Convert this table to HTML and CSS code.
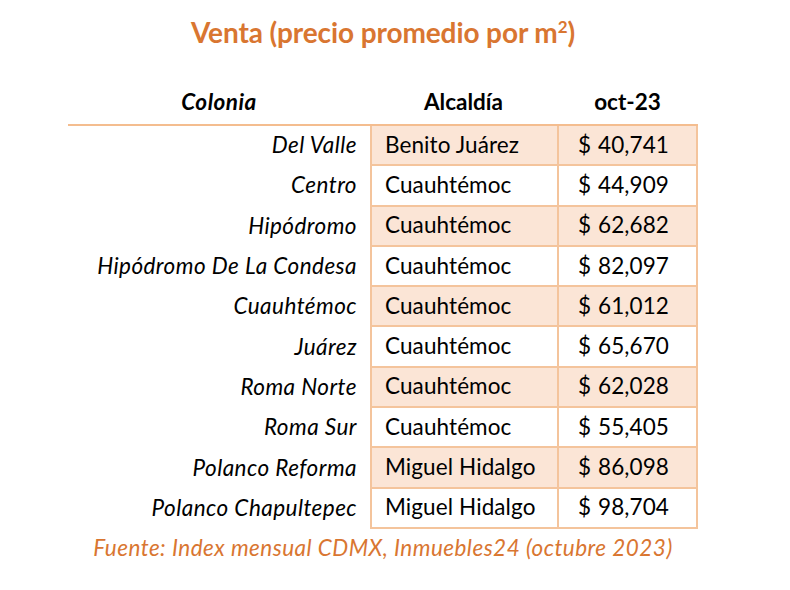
FILE: index.html
```html
<!DOCTYPE html>
<html lang="es">
<head>
<meta charset="utf-8">
<title>Venta (precio promedio por m²)</title>
<link rel="stylesheet" href="styles.css">
</head>
<body>
<div class="wrap">
  <h1 class="title">Venta (precio promedio por m<sup>2</sup>)</h1>
  <div class="table">
    <div class="hd hd-col">Colonia</div>
    <div class="hd">Alcaldía</div>
    <div class="hd">oct-23</div>

    <div class="col">Del Valle</div><div class="cell fill">Benito Juárez</div><div class="cell fill money"><span>$</span><span>40,741</span></div>
    <div class="col">Centro</div><div class="cell">Cuauhtémoc</div><div class="cell money"><span>$</span><span>44,909</span></div>
    <div class="col">Hipódromo</div><div class="cell fill">Cuauhtémoc</div><div class="cell fill money"><span>$</span><span>62,682</span></div>
    <div class="col">Hipódromo De La Condesa</div><div class="cell">Cuauhtémoc</div><div class="cell money"><span>$</span><span>82,097</span></div>
    <div class="col">Cuauhtémoc</div><div class="cell fill">Cuauhtémoc</div><div class="cell fill money"><span>$</span><span>61,012</span></div>
    <div class="col">Juárez</div><div class="cell">Cuauhtémoc</div><div class="cell money"><span>$</span><span>65,670</span></div>
    <div class="col">Roma Norte</div><div class="cell fill">Cuauhtémoc</div><div class="cell fill money"><span>$</span><span>62,028</span></div>
    <div class="col">Roma Sur</div><div class="cell">Cuauhtémoc</div><div class="cell money"><span>$</span><span>55,405</span></div>
    <div class="col">Polanco Reforma</div><div class="cell fill">Miguel Hidalgo</div><div class="cell fill money"><span>$</span><span>86,098</span></div>
    <div class="col last">Polanco Chapultepec</div><div class="cell last">Miguel Hidalgo</div><div class="cell money last"><span>$</span><span>98,704</span></div>
  </div>
  <p class="source">Fuente: Index mensual CDMX, Inmuebles24 (octubre 2023)</p>
</div>
</body>
</html>
```

FILE: styles.css
```css
* { box-sizing: border-box; }
html, body { margin: 0; padding: 0; background: #ffffff; }
body {
  font-family: Lato, "Open Sans", sans-serif;
  color: #000000;
  width: 790px;
  height: 590px;
  overflow: hidden;
}
.wrap {
  width: 630px;
  margin-left: 68px;
  padding-top: 14px;
}
.title {
  margin: 0;
  text-align: center;
  font-size: 28px;
  font-weight: 700;
  color: #D97631;
  line-height: 36px;
  letter-spacing: -0.1px;
}
.title sup {
  font-size: 17px;
  line-height: 0;
  vertical-align: 10px;
}
.table {
  margin-top: 34px;
  display: grid;
  grid-template-columns: 302px 187px 141px;
  grid-template-rows: 42px;
  grid-auto-rows: 40.3px;
}
.hd {
  font-weight: 700;
  font-size: 22.5px;
  display: flex;
  align-items: center;
  justify-content: center;
  border-bottom: 2px solid #F4BD8F;
  padding-bottom: 5px;
}
.hd-col { font-style: italic; letter-spacing: 0.5px; }
.col {
  font-style: italic;
  font-size: 22.5px;
  letter-spacing: 0.45px;
  display: flex;
  align-items: center;
  justify-content: flex-end;
  padding-right: 13px;
  padding-bottom: 3px;
}
.cell {
  font-size: 22.5px;
  letter-spacing: 0.1px;
  display: flex;
  align-items: center;
  padding-left: 13px;
  padding-bottom: 2px;
  border-left: 2px solid #F4C49C;
  border-bottom: 2px solid #F4C49C;
}
.cell.money {
  padding-left: 19px;
  padding-right: 27px;
  justify-content: space-between;
  border-right: 2px solid #F4C49C;
}
.fill { background: #FBE5D6; }
.source {
  margin: 5px 0 0 0;
  text-align: center;
  font-style: italic;
  font-size: 22.5px;
  letter-spacing: 0.47px;
  color: #D97631;
}
```
